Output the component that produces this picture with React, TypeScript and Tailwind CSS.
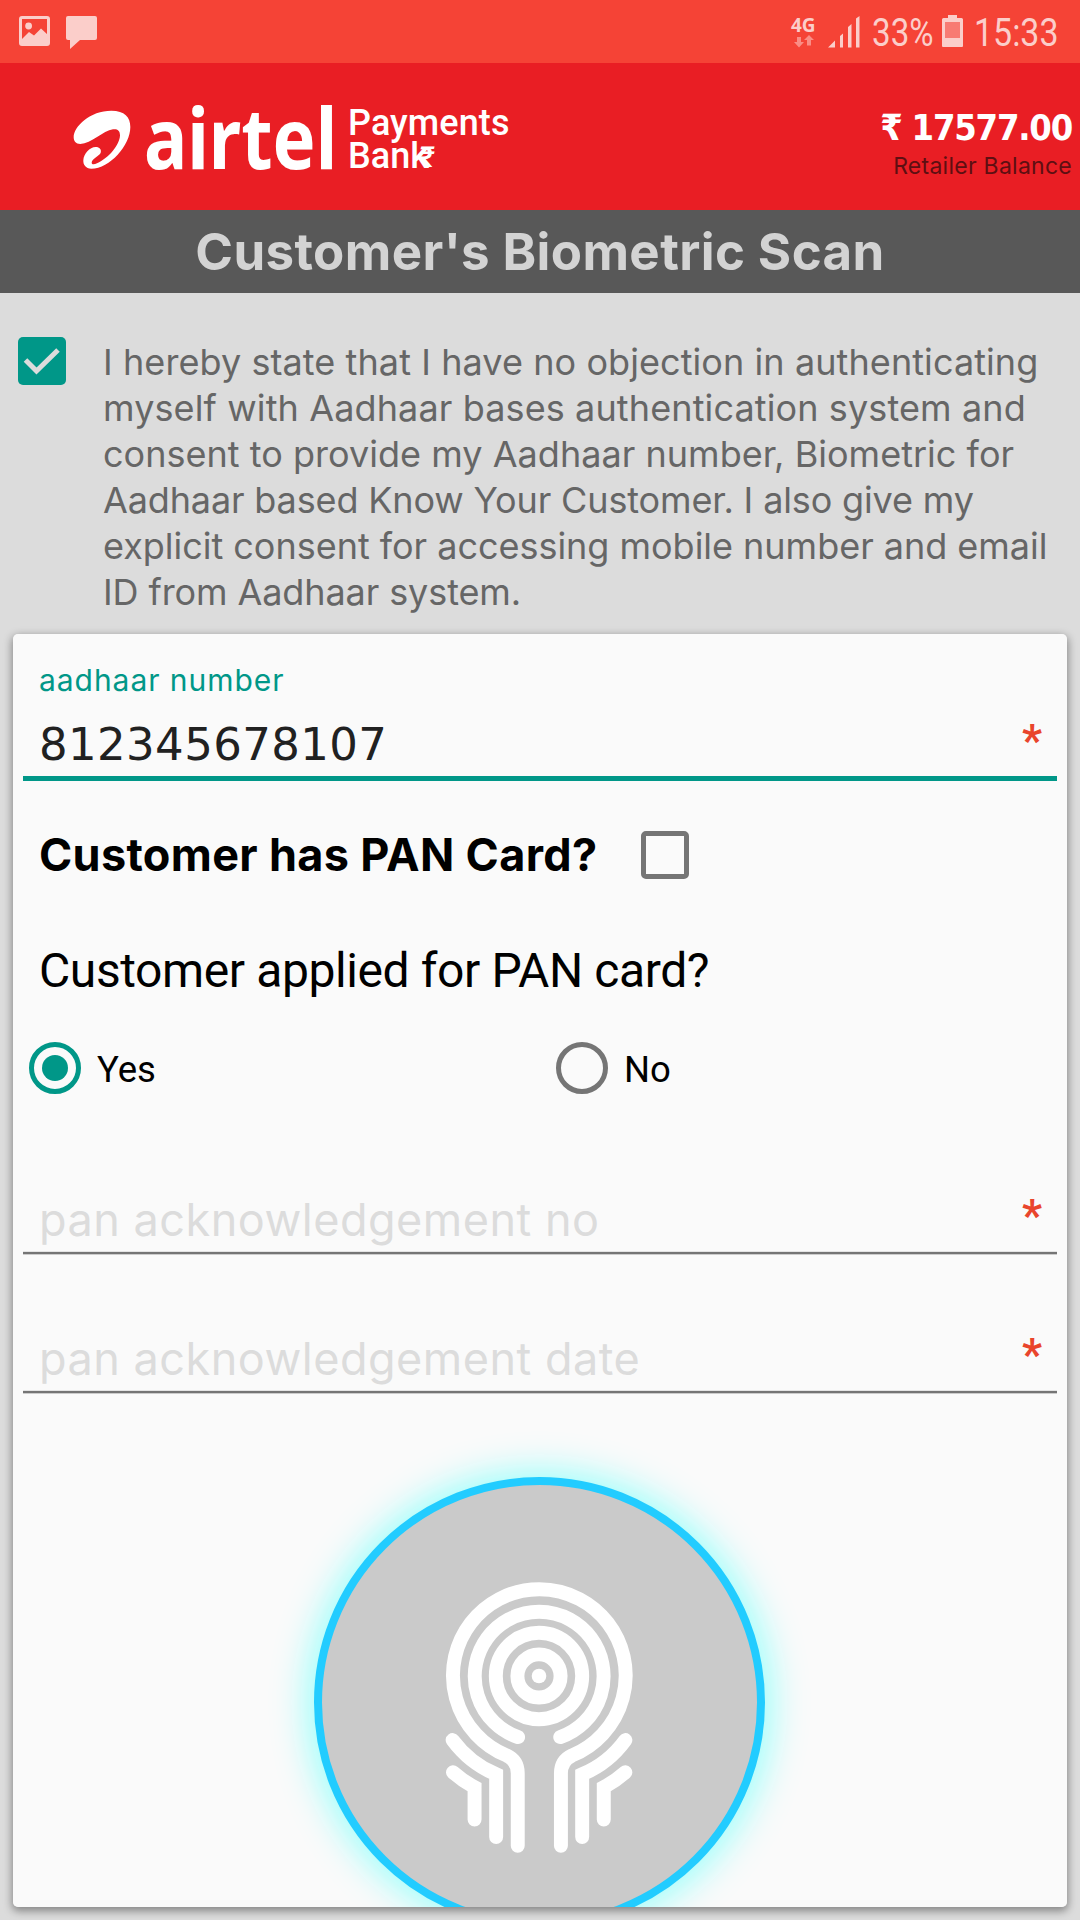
import React from "react";

function StatusBar() {
  return (
    <div className="flex h-[63px] w-full items-start bg-[#f54336] text-[#fbceca]">
      <svg className="mt-4 ml-[19px] h-[30px] w-[31px]" viewBox="0 0 31 30" fill="none">
        <rect x="1.5" y="1.5" width="28" height="27" rx="1.5" stroke="currentColor" strokeWidth="3" />
        <circle cx="9.6" cy="10" r="3.4" fill="currentColor" />
        <path d="M2 24 L10 16 L15 19.5 L22 12.5 L29 19 V28.5 H2Z" fill="currentColor" />
      </svg>
      <svg className="mt-4 ml-4 h-[33px] w-[31px]" viewBox="0 0 31 33" fill="currentColor">
        <path d="M2 0H29Q31 0 31 2V22Q31 24 29 24H14L4 33V24H2Q0 24 0 22V2Q0 0 2 0Z" />
      </svg>

      <div className="ml-[694px] flex w-[28px] flex-col pt-[14px]">
        <span className="h-[20px] font-['Noto_Sans',sans-serif] text-[19px] leading-[23px] font-bold">4G</span>
        <svg className="ml-[3px] h-[14px] w-[20px] text-[#fa8d85]" viewBox="0 0 20 14" fill="currentColor">
          <path d="M3 3H7V8H10L5 13.5L0 8H3Z" />
          <path d="M13 11.5H17V6H20L15 1L10 6H13Z" />
        </svg>
      </div>
      <svg className="mt-4 ml-[9px] h-[32px] w-[32px]" viewBox="0 0 32 32" fill="currentColor">
        <path d="M0 31.5L7 24.5V31.5Z M12 20L15 17.5V31.5H12Z M20 11L23.5 8V31.5H20Z M28 2.5L31.500 0V31.500H28Z" />
      </svg>
      <div className="mt-[10px] ml-[12px] w-[70px] origin-left scale-x-[0.85] font-['Roboto',sans-serif] text-[39px] leading-[46px]">33%</div>
      <svg className="mt-[15px] h-[32px] w-[21px]" viewBox="0 0 21 32">
        <path d="M6 0H15V3H19.500Q21 3 21 4.500V31Q21 32 20 32H1Q0 32 0 31V4.500Q0 3 1.500 3H6Z" fill="#fbceca" />
        <rect x="3" y="7" width="15" height="16" fill="#f87b73" />
      </svg>
      <div className="mt-[10px] ml-[11px] w-[90px] origin-left scale-x-[0.87] font-['Roboto',sans-serif] text-[39px] leading-[46px]">15:33</div>
    </div>
  );
}

function BrandHeader() {
  return (
    <div className="flex h-[147px] w-full items-start justify-between bg-[#e91e24] text-white">
      <div className="flex items-start">
        <svg className="mt-[47px] ml-[73px] h-[60px] w-[58px]" viewBox="40 59 174 180" fill="white">
          <path d="M42 141C42 108 92 61 155 61C195 61 212 80 212 110C212 165 150 235 95 235C78 235 70 223 71 210C72 190 90 170 108 170C120 170 126 178 123 187C120 196 95 205 96 218C97 224 105 222 112 219C147 203 180 165 181 135C181 120 172 115 160 117C130 121 95 160 62 161C48 161 42 152 42 141Z" />
        </svg>
        <div className="mt-[26px] ml-[13px] w-[204px] origin-left scale-x-[0.86] font-['Noto_Sans',sans-serif] text-[84px] leading-[96px] font-bold">
          airtel
        </div>
        <div className="mt-[44px] font-['Roboto',sans-serif] text-[36px] leading-[33px] font-medium">
          <div className="tracking-[0.1px]">Payments</div>
          <div className="flex">
            <span>Bank</span>
            <span className="-ml-[9px] text-[29px] leading-[34px]">₹</span>
          </div>
        </div>
      </div>
      <div className="flex flex-col items-end pt-[45px] pr-[8px]">
        <div className="font-['DejaVu_Sans_Condensed','DejaVu_Sans',sans-serif] text-[36px] leading-[40px] font-bold tracking-[-1.2px] [font-stretch:condensed]">
          ₹ 17577.00
        </div>
        <div className="mt-[3px] font-['Inter',sans-serif] text-[23px] leading-[30px] tracking-[0.26px] text-[#5e0f12]">Retailer Balance</div>
      </div>
    </div>
  );
}

function Consent() {
  return (
    <div className="flex h-[341px] w-full items-start">
      <div className="mt-[44px] ml-[18px] flex h-[48px] w-[48px] items-center justify-center rounded-[5px] bg-[#009788]">
        <svg className="h-[28px] w-[38px]" viewBox="0 0 38 28" fill="none">
          <path d="M2.500 13L13.500 24L35 3" stroke="#dcdcdc" strokeWidth="5" />
        </svg>
      </div>
      <div className="mt-[46px] ml-[37px] font-['Inter',sans-serif] text-[36px] leading-[46px] whitespace-nowrap text-[#666666]">
        <div className="tracking-[0.08px]">I hereby state that I have no objection in authenticating</div>
        <div className="tracking-[0.12px]">myself with Aadhaar bases authentication system and</div>
        <div className="tracking-[0.03px]">consent to provide my Aadhaar number, Biometric for</div>
        <div className="tracking-[-0.14px]">Aadhaar based Know Your Customer. I also give my</div>
        <div className="tracking-[-0.02px]">explicit consent for accessing mobile number and email</div>
        <div className="tracking-[-0.1px]">ID from Aadhaar system.</div>
      </div>
    </div>
  );
}

function Star() {
  return (
    <span className="mr-[12px] h-[50px] w-[26px] text-center font-['Roboto',sans-serif] text-[44px] leading-[43px] font-bold tracking-normal text-[#e9452c]">
      *
    </span>
  );
}

function EmptyField({ hint }: { hint: string }) {
  return (
    <div className="mx-[10px]">
      <div className="flex h-[57px] justify-between pl-[16px] font-['Inter',sans-serif] text-[45px] leading-[50px] tracking-[0.5px] text-[#dcdcdc]">
        <span>{hint}</span>
        <Star />
      </div>
      <div className="h-[2px] bg-[#757575] shadow-[0_1px_0_#cccccc,0_-1px_0_#e4e4e4]" />
    </div>
  );
}

function Scanner() {
  return (
    <div className="ml-[301px] flex h-[451px] w-[451px] shrink-0 justify-center rounded-full border-8 border-[#22ccff] bg-[#cacaca] shadow-[0_0_36px_6px_#98fffb]">
      <svg className="mt-[93px] -ml-px h-[279px] w-[200px]" viewBox="478 412 600 840" fill="none" stroke="white" strokeWidth="42" strokeLinecap="round">
        <circle cx="778" cy="707" r="22" fill="white" stroke="none" />
        <circle cx="778" cy="707" r="65" />
        <circle cx="778" cy="707" r="130" />
        <path d="M715 891A194 194 0 1 1 842 891" />
        <path d="M714 1218V1000Q714 962 680 946A260 260 0 1 1 878 946Q844 962 844 1000V1218" />
        <path d="M649 1192V1003Q570 970 518 900M908 1192V1003Q987 970 1038 900" />
        <path d="M584 1139V1042Q548 1023 519 997M973 1139V1042Q1009 1023 1038 997" />
      </svg>
    </div>
  );
}

export default function App() {
  return (
    <div className="flex h-[1920px] w-[1080px] flex-col overflow-hidden bg-[#dcdcdc]">
      <StatusBar />
      <BrandHeader />
      <div className="flex h-[83px] w-full items-center justify-center bg-[#585858] pt-[2px] font-['Inter',sans-serif] text-[51px] font-bold tracking-[0.4px] text-[#d3d3d3]">
        Customer's Biometric Scan
      </div>
      <Consent />
      <div className="mx-[13px] h-[1273px] rounded-[5px] shadow-[0_3px_8px_1px_rgba(0,0,0,0.4)]">
        <div className="flex h-[1273px] flex-col overflow-hidden rounded-[5px] bg-[#fafafa]">
          <div className="mx-[10px] pt-[26px]">
            <div className="pl-[16px] font-['Inter',sans-serif] text-[30px] leading-[40px] tracking-[0.95px] text-[#009788]">aadhaar number</div>
            <div className="mt-[20px] flex h-[56px] justify-between pl-[16px] font-['DejaVu_Sans',sans-serif] text-[45px] leading-[50px] tracking-[0.4px] text-[#212121]">
              <span>812345678107</span>
              <Star />
            </div>
            <div className="h-[5px] bg-[#009788]" />
          </div>
          <div className="mt-[50px] flex h-[48px] items-center pl-[26px] font-['Inter',sans-serif] text-[45px] leading-[48px] font-bold tracking-[0.33px] text-black">
            <span className="w-[602px]">Customer has PAN Card?</span>
            <span className="h-[48px] w-[48px] rounded-[5px] border-5 border-[#757575]" />
          </div>
          <div className="mt-[64px] pl-[26px] font-['Roboto',sans-serif] text-[48px] leading-[56px] tracking-[-0.4px] text-black">
            Customer applied for PAN card?
          </div>
          <div className="mt-[42px] flex h-[54px] items-center pl-[16px] font-['Roboto',sans-serif] text-[36.500px] leading-[54px] text-black">
            <div className="flex w-[527px] items-center">
              <span className="flex h-[52px] w-[52px] items-center justify-center rounded-full border-5 border-[#009788]">
                <span className="h-[26px] w-[26px] rounded-full bg-[#009788]" />
              </span>
              <span className="ml-[16px] pt-[3px]">Yes</span>
            </div>
            <span className="h-[52px] w-[52px] rounded-full border-5 border-[#757575]" />
            <span className="ml-[16px] pt-[3px]">No</span>
          </div>
          <div className="mt-[100px]">
            <EmptyField hint="pan acknowledgement no" />
          </div>
          <div className="mt-[80px]">
            <EmptyField hint="pan acknowledgement date" />
          </div>
          <div className="mt-[84px]">
            <Scanner />
          </div>
        </div>
      </div>
    </div>
  );
}
